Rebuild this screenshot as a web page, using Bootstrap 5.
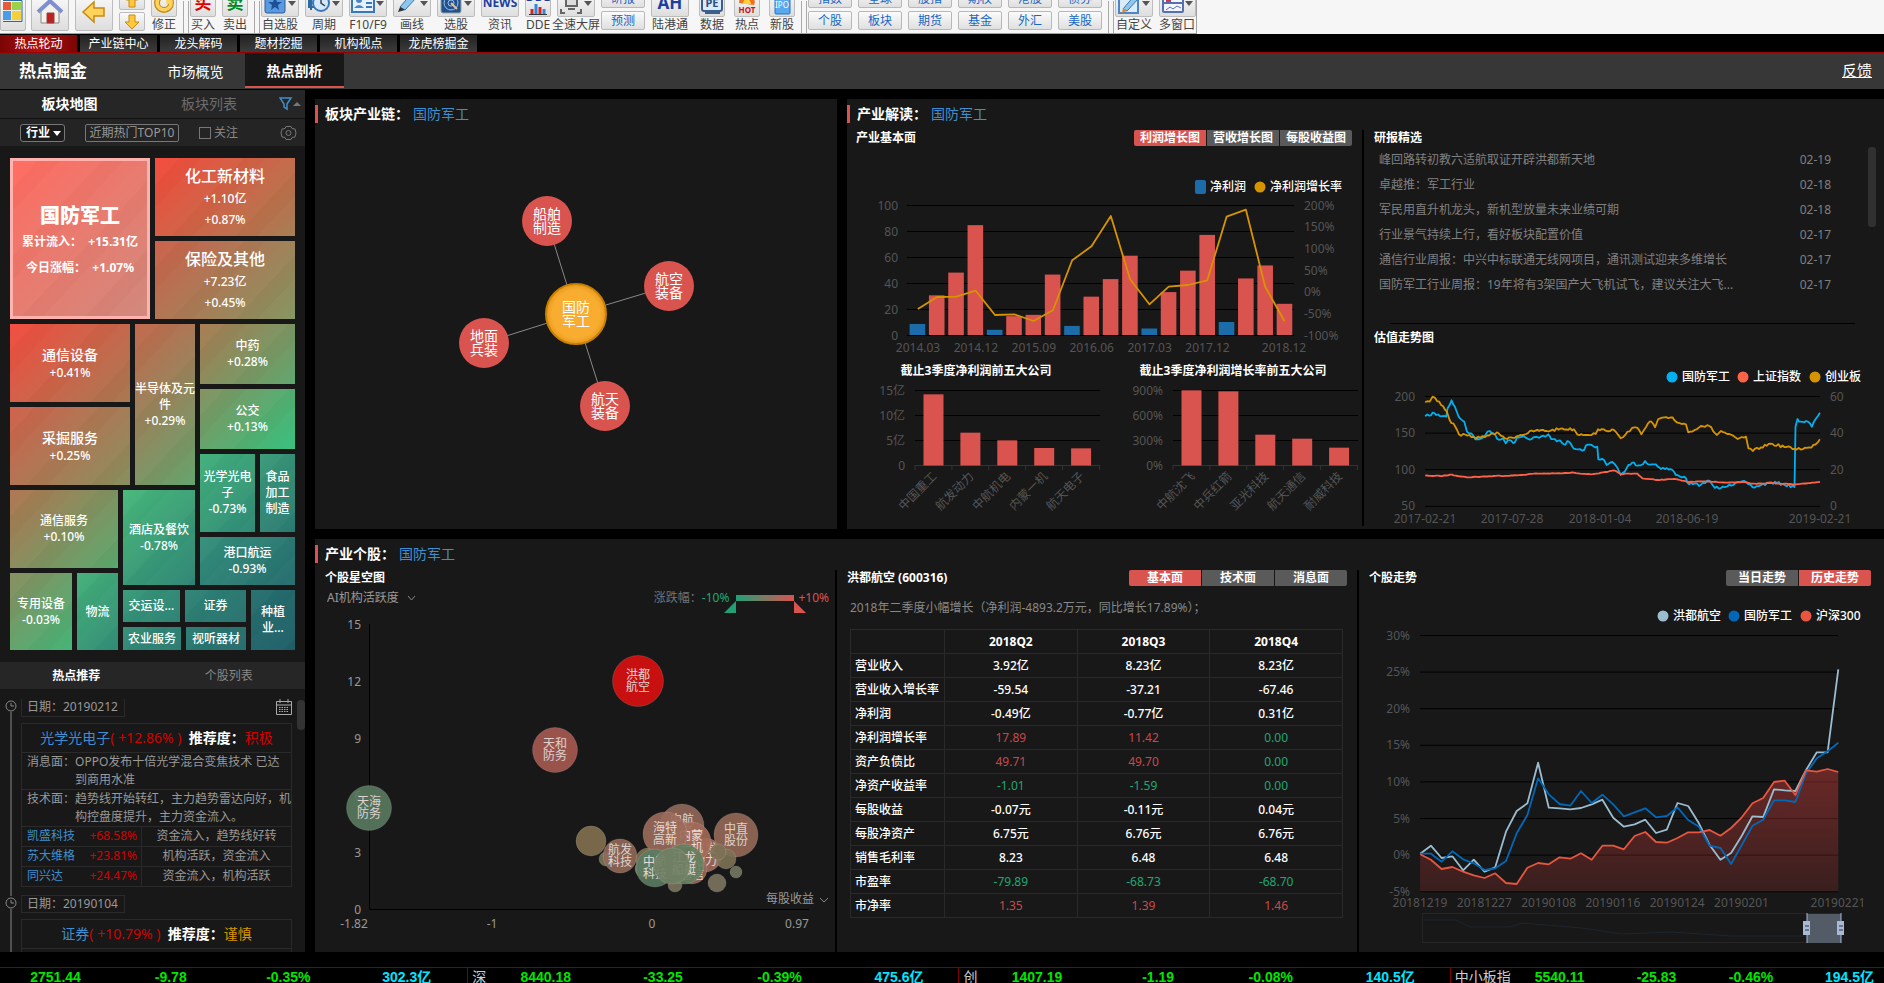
<!DOCTYPE html>
<html lang="zh-CN">
<head>
<meta charset="utf-8">
<meta name="viewport" content="width=device-width, initial-scale=1">
<title>热点掘金</title>
<link rel="stylesheet" href="https://cdn.jsdelivr.net/npm/bootstrap@5.3.0/dist/css/bootstrap.min.css">
<style>
:root{--red:#d9534f;--blue:#3d8fd1;--panel:#181818;--up:#c9484a;--down:#1fa872}
body{background:#000;color:#fff;font:12px/16px "Noto Sans","Noto Sans CJK SC",sans-serif;height:100vh;overflow:hidden}
button{font-family:inherit}
a{color:var(--blue);text-decoration:none}
svg{display:block}
svg text{font-size:12px;fill:#fff}
/* toolbar */
.toolbar{height:34px;background:#f6f6f6;overflow:hidden;flex:none}
.tools{height:34px;border-bottom:1px solid #a0a0a0;border-right:1px solid #a0a0a0}
.tool{background:none;border:0;padding:0;color:#444;font-size:12px;line-height:16px;flex:none;display:flex;flex-direction:column;align-items:flex-start}
.tool>span{white-space:nowrap;text-align:center}
.w-s{width:32px}.w-s>*{width:26px}
.w-m{width:35px}.w-m>*{width:26px}
.w-l{width:44px}.w-l>*{width:38px}
.w-x{width:48px}.w-x>*{width:38px}
.w-start{width:31px}.w-start>*{width:26px}
.wide-label{display:flex;justify-content:center}
.ico{height:28px;border:1px solid #bcbcbc;border-radius:2px;background:linear-gradient(#fafafa,#dedede);display:flex;align-items:center;justify-content:center}
.drop{justify-content:flex-start}
.drop svg{margin-left:1px}
.drop::after{content:"";margin-left:auto;border:4px solid transparent;border-top:5px solid #555;border-bottom:0;margin-right:2px}
.big{height:39px;margin-bottom:2px}
.half{height:19px;margin-bottom:2px}
.glyph{font-weight:700;font-size:17px;color:#1c3f9e}
.glyph.buy{color:#e00000}.glyph.sell{color:#008a1c}.glyph.tiny{font-size:12px}
.bar-sep{width:6px;height:32px;border-left:1px solid #aaa;border-right:1px solid #aaa;margin-right:1px;flex:none}
.links{width:50px;flex:none;padding-right:6px}
.links button{display:block;width:100%;height:19px;margin-bottom:3px;padding:0;border:1px solid #b8b8b8;border-radius:2px;background:linear-gradient(#fbfbfb,#dfdfdf);color:#1767c4;font-size:12px;line-height:17px}
/* tabs */
.tabs{height:19px;padding-top:1px;gap:3px;border-bottom:1px solid #900;flex:none}
.tabs button{width:77px;height:17px;border:0;padding:0;background:linear-gradient(#222,#3c3c3c);color:#fff;font-size:12px;line-height:17px}
.tabs .on{background:linear-gradient(90deg,#7a0505,#b01111 50%,#7a0505)}
.head{height:36px;background:#373737;flex:none;padding-left:19px;font-size:14px;margin-bottom:1px}
.head h1{font-size:17px;line-height:36px;font-weight:700;margin:0;width:127px}
.head button{height:35px;width:99px;border:0;background:none;color:#fff;font-size:14px;padding:2px 0 0}
.head .on{background:var(--panel);border-bottom:2px solid var(--red);font-weight:700}
.head a{color:#fff;text-decoration:underline;font-size:15px;margin-left:auto;padding:9px 12px}
/* sidebar */
main{min-height:0}
.side{width:305px;background:var(--panel);flex:none;overflow:hidden;margin-bottom:15px}
.side-tabs{height:29px;background:#262626;font-size:14px;border-bottom:1px solid #111}
.side-tabs button,.rec-tabs button{border:0;background:none;color:#6c6c6c;padding:0}
.side-tabs button{width:139px}
.side-tabs button+button{text-align:left;padding-left:42px;width:130px}
.side-tabs .on,.rec-tabs .on{color:#fff;font-weight:700}
.filters{height:27px;background:#242424;color:#888;padding:1px 0 0 20px}
.filters select{appearance:none;background:#1c1c1c;border:1px solid #777;border-radius:3px;color:#fff;font:700 12px/16px "Noto Sans","Noto Sans CJK SC",sans-serif;width:45px;height:18px;padding:0 5px}
.caret{position:relative}
.caret::after{content:"";position:absolute;right:4px;top:7px;border:4px solid transparent;border-top:5px solid #fff;border-bottom:0;pointer-events:none}
.filters button{background:none;border:1px solid #777;border-radius:2px;color:#999;font-size:12px;line-height:16px;height:18px;width:94px;padding:0;margin:0 20px;white-space:nowrap}
.filters input{appearance:none;width:12px;height:12px;border:1px solid #777;margin:0 3px 0 0}
.map{height:492px;margin:12px 10px;gap:5px;flex:none}
.map .d-flex{gap:5px;min-width:0;min-height:0}
.tile{min-width:0;min-height:0;display:flex;flex-direction:column;align-items:center;justify-content:center;text-align:center;overflow:hidden;line-height:16px;font-weight:500;
 background:repeating-linear-gradient(133deg,rgba(255,255,255,.02) 0 18px,rgba(0,0,0,.012) 18px 34px,rgba(255,255,255,.01) 34px 47px),linear-gradient(135deg,var(--a),var(--b))}
.tile b{font-size:20px;line-height:26px}
.t16{font-size:16px;line-height:24px}.t14{font-size:14px;line-height:20px}
.r22{line-height:21px}
.hero{border:3px solid #ffb2ae;--a:#ff6a60;--b:#d0887a;font-weight:700;padding-top:6px}
.hero span{line-height:26px}
.c1{--a:#f4493a;--b:#a57c50}.c2{--a:#cc5f49;--b:#83955f}.c3{--a:#f34b3e;--b:#a57850}.c4{--a:#d05f49;--b:#868f5c}
.c5{--a:#c4664a;--b:#62a36b}.c6{--a:#a97a50;--b:#5ca56c}.c7{--a:#85905e;--b:#33c07c}.c8{--a:#42b07a;--b:#2f8a76}
.c9{--a:#3a9a78;--b:#2b7a72}.c10{--a:#34907a;--b:#256c6e}.c11{--a:#b0744e;--b:#58a86c}.c12{--a:#48b87a;--b:#2d8474}
.c13{--a:#8a8c5c;--b:#42b477}.c14{--a:#44b078;--b:#318c76}.c15{--a:#389a78;--b:#2c8074}.c16{--a:#308476;--b:#26706e}
.c17{--a:#358e76;--b:#2a7a72}.c18{--a:#2b7c72;--b:#256a6c}.c19{--a:#26706e;--b:#1f5e68}
.rec-tabs{height:27px;background:#262626;flex:none}
.rec-tabs button:not(.on){color:#888}
.feed{color:#999;padding:10px 13px 0 21px;position:relative}
.feed .rail{position:absolute;left:5px;top:10px}
.feed .thumb{position:absolute;right:0;top:11px;width:8px;height:30px;border-radius:4px;background:#333}
.date{width:104px;height:18px;border:1px solid #2a2a2a;padding-left:5px;line-height:16px}
.rec{border:1px solid #2a2a2a;margin:6px 0 8px}
.rec>div+div{border-top:1px solid #2a2a2a}
.rec h3{font-size:14px;line-height:28px;margin:0;font-weight:400;text-align:center;color:#fff;border-bottom:1px solid #2a2a2a}
.rec h3 i,.rd{color:#d40000;font-style:normal}
.rec h3 .warn{color:#d69400}
.rec .say{line-height:18px;padding-left:5px;height:36px}
.rec .say+.say{height:37px}
.rec .say span{flex:none}
.rec .say div{margin-right:-1px;flex:1}
.stk{height:20px;line-height:18px;white-space:nowrap}
.stk>div:first-child{width:120px;border-right:1px solid #2a2a2a;padding:0 4px 0 5px}
/* panels */
.main-grid{padding:9px 0 15px 10px;gap:10px;min-width:0}
.pane{background:var(--panel);min-width:0;min-height:0;overflow:hidden}
.pane-title{border-left:3px solid var(--red);font-size:14px;line-height:18px;padding-left:7px;margin:6px 0 0;font-weight:700}
.pane-title a{font-weight:400;margin-left:4px}
.cols{padding-top:7px}
.cols>div{min-width:0}
.sub{font-size:12px;line-height:16px;font-weight:700;margin:0}
.sub-in{padding-left:10px}
.vline{width:2px;background:#000;flex:none}
.seg-btn{display:flex;gap:1px}
.seg-btn button{width:72px;height:16px;border:0;padding:0;background:#5a5a5a;color:#fff;font-size:12px;font-weight:700;line-height:16px}
.seg-btn .on{background:var(--red)}
.seg-btn button:first-child{border-radius:2px 0 0 2px}.seg-btn button:last-child{border-radius:0 2px 2px 0}
.news{list-style:none;margin:1px 0 0;padding:0 53px 0 15px;line-height:25px;position:relative}
.news a{color:#808080}.news li{display:flex;justify-content:space-between;color:#808080}
.news::after{content:"";position:absolute;right:8px;top:0;width:8px;height:80px;border-radius:3px;background:#303030}
.rule{border-top:1px solid #000;margin:16px 29px 6px 26px}
.news-box{height:177px}
.pick{appearance:none;background:none;border:0;color:#999;font:12px/16px "Noto Sans","Noto Sans CJK SC",sans-serif;padding:0}
.ax text{fill:#555}.ax2 text{fill:#999}
.axis-row{padding-left:12px;height:23px}
.lo{color:#1fa878;margin-right:7px}.hi{color:#d9534f;margin:0 6px 0 4px}
.grade{height:6px;width:58px;background:linear-gradient(90deg,#20a077,#d9534f)}
.grade-ends{position:absolute;left:-12px;top:6px}
.note{color:#888;padding:14px 0 0 13px}
.fin{width:493px;border-collapse:collapse;table-layout:fixed;margin:13px 0 0 13px;font-weight:500}
.fin th,.fin td{border:1px solid #2a2a2a;height:24px;padding:0;text-align:center;line-height:16px}
.fin th:first-child{width:94px;text-align:left;padding-left:4px;font-weight:500;white-space:nowrap}
.up{color:var(--up);font-weight:400}.dn{color:var(--down);font-weight:400}
/* ticker */
.ticker{height:16px;border-top:1px solid #800000;overflow:hidden;flex:none;font:700 14px/18px "Liberation Sans","Noto Sans CJK SC",sans-serif;color:#00e600}
.ticker>div{display:grid;text-align:right;white-space:nowrap}
.ticker>div+div{border-left:1px solid #800000}
.ticker em{font-style:normal;font-weight:400;color:#ccc;text-align:left;padding-left:4px}
.ticker u{text-decoration:none;color:#00e5ff}
.k1{flex:468;grid-template-columns:81fr 106fr 124fr 121fr 36fr}
.k2{flex:491;grid-template-columns:25fr 78fr 112fr 119fr 122fr 35fr}
.k4{flex:434;grid-template-columns:62fr 72fr 92fr 97fr 101fr 10fr}
</style>
</head>
<body class="d-flex flex-column">
<header class="toolbar"><div class="tools d-inline-flex align-items-end">
 <button class="tool w-start" aria-label="开始"><span class="ico big"><svg width="20" height="24" viewBox="0 0 20 24"><path d="M0 2h8v8H0z" fill="#e85a3a"/><path d="M9 2h9v8H9z" fill="#9bd04a"/><path d="M0 11h8v9H0z" fill="#4a9be8"/><path d="M9 11h9v9H9z" fill="#f6cf3c"/><path d="M0 .5h19v21H0" fill="none" stroke="#2c6ba0"/></svg></span></button>
 <button class="tool w-l" aria-label="首页"><span class="ico big"><svg width="28" height="28" viewBox="0 0 28 28"><path d="M5 12v13h18V12L14 5z" fill="#f4f0ea" stroke="#888"/><path d="M2 14 14 3l12 11" fill="none" stroke="#7d8fd0" stroke-width="4"/><path d="M11 15h7v10h-7z" fill="#c02020" stroke="#844"/></svg></span></button>
 <button class="tool w-l" aria-label="后退"><span class="ico big"><svg width="26" height="26" viewBox="0 0 26 26"><path d="M2 13 13 3v6h10v8H13v6z" fill="#ffd25a" stroke="#c58a18" stroke-width="1.5"/></svg></span></button>
 <button class="tool w-s" aria-label="上下翻页"><span class="ico half"><svg width="14" height="16" viewBox="0 0 14 16"><path d="M4 14V7H1l6-6 6 6h-3v7z" fill="#ffc83c" stroke="#c58a18"/></svg></span><span class="ico half"><svg width="16" height="16" viewBox="0 0 16 16"><path d="M5 1v7H1l7 7 7-7h-4V1z" fill="#ffc83c" stroke="#c58a18"/></svg></span></button>
 <button class="tool w-s"><span class="ico"><svg width="22" height="22" viewBox="0 0 22 22"><circle cx="11" cy="11" r="7" fill="none" stroke="#c58a18" stroke-width="6"/><path d="M6 6a7 7 0 1 0 9-1v7" fill="none" stroke="#ffd25a" stroke-width="3.5"/></svg></span><span>修正</span></button>
 <i class="bar-sep" aria-hidden="true"></i>
 <button class="tool w-s"><span class="ico glyph buy">买</span><span>买入</span></button>
 <button class="tool w-s"><span class="ico glyph sell">卖</span><span>卖出</span></button>
 <i class="bar-sep" aria-hidden="true"></i>
 <button class="tool w-l"><span class="ico drop"><svg width="24" height="24" viewBox="0 0 24 24"><rect x="2" y="2" width="20" height="20" rx="2" fill="#5a9be0" stroke="#2c5a9a"/><path d="m12 6 2 5h5l-4 3 1 5-4-3-4 3 1-5-4-3h5z" fill="#1d4f96"/></svg></span><span>自选股</span></button>
 <button class="tool w-l"><span class="ico drop"><svg width="24" height="24" viewBox="0 0 24 24"><path d="M4 3v16M2 7h5v9H2z" fill="#d8e8fa" stroke="#2c6ba0" stroke-width="2"/><circle cx="14" cy="12" r="8" fill="#d6e8fb" stroke="#3b78b8" stroke-width="2"/><path d="M14 6v6l4 3" fill="none" stroke="#345" stroke-width="1.5"/></svg></span><span>周期</span></button>
 <button class="tool w-l"><span class="ico drop"><svg width="24" height="24" viewBox="0 0 24 24"><rect x="1" y="3" width="22" height="18" fill="#e8f2ff" stroke="#3b78b8" stroke-width="2"/><circle cx="8" cy="9" r="3" fill="#4a86c8"/><path d="M3 17q5-6 10 0" fill="#4a86c8"/><path d="M15 8h6M15 12h6M15 16h6" stroke="#3b78b8" stroke-width="2"/></svg></span><span>F10/F9</span></button>
 <button class="tool w-l"><span class="ico drop"><svg width="24" height="24" viewBox="0 0 24 24"><path d="M5 16 17 2l5 4L10 19z" fill="#8fc6ee" stroke="#3b78a8"/><path d="m5 16-2 5 7-2z" fill="#333"/></svg></span><span>画线</span></button>
 <button class="tool w-l"><span class="ico drop"><svg width="24" height="24" viewBox="0 0 24 24"><rect x="2" y="2" width="20" height="20" rx="2" fill="#24508c" stroke="#8aa"/><circle cx="12" cy="12" r="7" fill="none" stroke="#9cc4ee"/><circle cx="12" cy="12" r="3" fill="none" stroke="#9cc4ee"/><path d="m12 12 6 6" stroke="#e8c080" stroke-width="2"/></svg></span><span>选股</span></button>
 <button class="tool w-l"><span class="ico glyph tiny">NEWS</span><span>资讯</span></button>
 <button class="tool w-s"><span class="ico glyph tiny flex-column lh-1">DDE<svg width="20" height="12" viewBox="0 0 20 12"><path d="M1 11.5h18" stroke="#333"/><path d="M4 11V6M12 11V4" stroke="#e02020" stroke-width="3"/><path d="M8 11V1M16 11V6" stroke="#2a8ae0" stroke-width="3"/></svg></span><span>DDE</span></button>
 <button class="tool w-l"><span class="ico drop"><svg width="24" height="24" viewBox="0 0 24 24"><rect x="7" y="6" width="11" height="9" fill="#ddd" stroke="#666" stroke-width="2"/><path d="M9 18h7M2 18v4h4M22 18v4h-4M2 6V2h4M22 6V2h-4" fill="none" stroke="#666" stroke-width="2"/></svg></span><span class="wide-label">全速大屏</span></button>
 <div class="links"><button>研报</button><button>预测</button></div>
 <button class="tool w-x"><span class="ico glyph">AH</span><span>陆港通</span></button>
 <button class="tool w-m"><span class="ico"><svg width="24" height="24" viewBox="0 0 24 24"><rect x="2" y="3" width="20" height="17" rx="2" fill="#dbe9f8" stroke="#3a5f8c" stroke-width="2"/><path d="M5 22h15" stroke="#3a5f8c" stroke-width="2"/><text x="12" y="16" text-anchor="middle" style="font-size:11px;fill:#2a4f80;font-weight:700">PE</text></svg></span><span>数据</span></button>
 <button class="tool w-m"><span class="ico"><svg width="24" height="24" viewBox="0 0 24 24"><path d="M4 12q0-5 4-8 0 3 3 3 0-3 2-6 1 4 5 6 3 3 1 7z" fill="#f2701e"/><path d="M8 13q0-4 4-6 4 3 4 6z" fill="#ffd23c"/><text x="12" y="22" text-anchor="middle" style="font-size:8px;fill:#d01010;font-weight:700">HOT</text></svg></span><span>热点</span></button>
 <button class="tool w-s"><span class="ico"><svg width="22" height="24" viewBox="0 0 22 24"><rect x="4" y="1" width="15" height="22" rx="1" fill="#58a9ee" stroke="#2474c0"/><text x="11" y="17" text-anchor="middle" style="font-size:8px;fill:#fff">IPO</text></svg></span><span>新股</span></button>
 <i class="bar-sep" aria-hidden="true"></i>
 <div class="links"><button>指数</button><button>个股</button></div>
 <div class="links"><button>全球</button><button>板块</button></div>
 <div class="links"><button>股指</button><button>期货</button></div>
 <div class="links"><button>期权</button><button>基金</button></div>
 <div class="links"><button>港股</button><button>外汇</button></div>
 <div class="links"><button>债券</button><button>美股</button></div>
 <i class="bar-sep" aria-hidden="true"></i>
 <button class="tool w-l"><span class="ico drop"><svg width="24" height="24" viewBox="0 0 24 24"><rect x="2" y="4" width="19" height="18" fill="#dcebfa" stroke="#4a86c8" stroke-width="2"/><path d="M6 18 18 4l4 3L10 20z" fill="#8fc6ee" stroke="#3b78a8"/><path d="m6 17-1 5 5-2z" fill="#e08a20"/></svg></span><span>自定义</span></button>
 <button class="tool"><span class="ico drop"><svg width="24" height="24" viewBox="0 0 24 24"><rect x="2" y="2" width="20" height="19" rx="1" fill="#f4f6ff" stroke="#5570b0" stroke-width="2"/><path d="M3 12h18" stroke="#5570b0" stroke-width="2"/><path d="M5 7h5M5 10h5" stroke="#c03a5a" stroke-width="2"/><path d="m5 19 4-3 3 2 4-3 4 2" stroke="#5570b0" fill="none"/></svg></span><span>多窗口</span></button>
</div></header>
<nav class="tabs d-flex"><button class="on">热点轮动</button><button>产业链中心</button><button>龙头解码</button><button>题材挖掘</button><button>机构视点</button><button>龙虎榜掘金</button></nav>
<div class="head d-flex"><h1>热点掘金</h1><button>市场概览</button><button class="on">热点剖析</button><a href="#">反馈</a></div>

<main class="d-flex flex-grow-1">
<aside class="side d-flex flex-column">
 <div class="side-tabs d-flex align-items-center flex-shrink-0"><button class="on">板块地图</button><button>板块列表</button>
  <svg class="ms-auto me-1" width="22" height="14" viewBox="0 0 22 14"><path d="M1 1h11L8 7v5l-3-2V7z" fill="none" stroke="#3d8fd1" stroke-width="1.5"/><path d="m14 9 4-4 4 4z" fill="#777"/></svg></div>
 <div class="filters d-flex align-items-center flex-shrink-0"><label class="caret"><select aria-label="分类"><option>行业</option></select></label><button>近期热门TOP10</button><label class="d-flex align-items-center"><input type="checkbox">关注</label>
  <svg class="ms-auto me-2" width="17" height="16" viewBox="0 0 17 16" fill="none" stroke="#777"><path d="M6 1.5h5l1 2 3 .5 1 4-1 4-3 .5-1 2H6l-1-2-3-.5-1-4 1-4 3-.5z"/><circle cx="8.5" cy="8" r="2.5"/></svg></div>
 <div class="map d-flex flex-column">
  <div class="d-flex" style="flex:161"><div class="tile hero w-50"><b>国防军工</b><span>累计流入：&nbsp; +15.31亿</span><span>今日涨幅：&nbsp; +1.07%</span></div>
   <div class="d-flex flex-column w-50"><div class="tile c1 flex-fill r22"><span class="t16">化工新材料</span><span>+1.10亿</span><span>+0.87%</span></div><div class="tile c2 flex-fill r22"><span class="t16">保险及其他</span><span>+7.23亿</span><span>+0.45%</span></div></div></div>
  <div class="d-flex" style="flex:326">
   <div class="d-flex flex-column" style="width:185px">
    <div class="d-flex" style="flex:161"><div class="d-flex flex-column" style="width:120px"><div class="tile c3" style="flex:1"><span class="t14">通信设备</span><span>+0.41%</span></div><div class="tile c4" style="flex:1"><span class="t14">采掘服务</span><span>+0.25%</span></div></div><div class="tile c5" style="flex:1">半导体及元件<span>+0.29%</span></div></div>
    <div class="d-flex" style="flex:160">
     <div class="d-flex flex-column" style="width:108px"><div class="tile c11" style="flex:78"><span>通信服务</span><span>+0.10%</span></div><div class="d-flex" style="flex:77"><div class="tile c13" style="flex:62">专用设备<span>-0.03%</span></div><div class="tile c14" style="flex:41">物流</div></div></div>
     <div class="d-flex flex-column" style="width:72px"><div class="tile c12" style="flex:95">酒店及餐饮<span>-0.78%</span></div><div style="flex:60"></div></div>
    </div>
   </div>
   <div class="d-flex flex-column" style="width:95px"><div class="tile c6" style="flex:60">中药<span>+0.28%</span></div><div class="tile c7" style="flex:60">公交<span>+0.13%</span></div>
    <div class="d-flex" style="flex:78"><div class="tile c8" style="flex:55">光学光电子<span>-0.73%</span></div><div class="tile c9" style="flex:35">食品<br>加工<br>制造</div></div>
    <div class="tile c10" style="flex:48">港口航运<span>-0.93%</span></div><div style="flex:60"></div></div>
  </div>
  <div class="d-flex" style="height:60px;margin:-65px 0 0 113px"><div class="d-flex flex-column" style="width:123px"><div class="d-flex" style="flex:32"><div class="tile c15" style="flex:57">交运设...</div><div class="tile c16" style="flex:61">证券</div></div><div class="d-flex" style="flex:23"><div class="tile c17" style="flex:58">农业服务</div><div class="tile c18" style="flex:60">视听器材</div></div></div><div class="tile c19" style="flex:1">种植<br>业...</div></div>
 </div>
 <div class="rec-tabs d-flex"><button class="on w-50">热点推荐</button><button class="w-50">个股列表</button></div>
 <div class="feed">
  <svg class="rail" width="13" height="260" viewBox="0 0 13 260" fill="none" stroke="#888"><circle cx="6" cy="7" r="5"/><path d="M6 4v3h3M6 13v184M6 210v50M6 201v3h3"/><circle cx="6" cy="204" r="5"/></svg><i class="thumb"></i>
  <div class="d-flex justify-content-between"><div class="date border-top-0">日期：20190212</div><svg width="16" height="16" viewBox="0 0 16 16" fill="none" stroke="#aaa"><path d="M.5 2.5h15v13H.5zM.5 6h15M4 0v4M12 0v4"/><path d="M3 8.5h10M3 10.5h10M3 12.5h10" stroke-dasharray="1.5 1"/></svg></div>
  <div class="rec"><h3><a href="#">光学光电子</a><i>( +12.86% )</i>&nbsp; <b>推荐度：</b><i>积极</i></h3>
   <div class="say d-flex"><span>消息面：</span><div>OPPO发布十倍光学混合变焦技术 已达<br>到商用水准</div></div>
   <div class="say d-flex"><span>技术面：</span><div>趋势线开始转红，主力趋势雷达向好，机构控盘度提升，主力资金流入。</div></div>
   <div class="stk d-flex"><div class="d-flex justify-content-between"><a href="#">凯盛科技</a><span class="rd">+68.58%</span></div><div class="flex-fill text-center">资金流入，趋势线好转</div></div>
   <div class="stk d-flex"><div class="d-flex justify-content-between"><a href="#">苏大维格</a><span class="rd">+23.81%</span></div><div class="flex-fill text-center">机构活跃，资金流入</div></div>
   <div class="stk d-flex"><div class="d-flex justify-content-between"><a href="#">同兴达</a><span class="rd">+24.47%</span></div><div class="flex-fill text-center">资金流入，机构活跃</div></div>
  </div>
  <div class="date">日期：20190104</div>
  <div class="rec"><h3><a href="#">证券</a><i>( +10.79% )</i>&nbsp; <b>推荐度：</b><span class="warn">谨慎</span></h3><div class="say"></div></div>
 </div>
</aside>

<div class="main-grid d-flex flex-column flex-grow-1">
 <div class="d-flex" style="flex:430;gap:10px;min-height:0">
  <section class="pane" style="flex:522"><h2 class="pane-title">板块产业链：<a href="#">国防军工</a></h2>
   <svg id="net" width="100%" viewBox="315 123 522 400"></svg></section>
  <section class="pane" style="flex:1037"><h2 class="pane-title">产业解读：<a href="#">国防军工</a></h2>
   <div class="cols d-flex">
    <div style="flex:515"><div class="d-flex justify-content-between" style="padding:0 10px 0 9px"><h3 class="sub">产业基本面</h3><div class="seg-btn"><button class="on">利润增长图</button><button>营收增长图</button><button>每股收益图</button></div></div>
     <svg id="profit" class="ax" width="100%" viewBox="847 146 515 373"></svg></div>
    <i class="vline"></i>
    <div style="flex:520"><div class="news-box"><h3 class="sub sub-in">研报精选</h3>
     <ul class="news"><li><a href="#">峰回路转初教六适航取证开辟洪都新天地</a><span>02-19</span></li><li><a href="#">卓越推：军工行业</a><span>02-18</span></li><li><a href="#">军民用直升机龙头，新机型放量未来业绩可期</a><span>02-18</span></li><li><a href="#">行业景气持续上行，看好板块配置价值</a><span>02-17</span></li><li><a href="#">通信行业周报：中兴中标联通无线网项目，通讯测试迎来多维增长</a><span>02-17</span></li><li><a href="#">国防军工行业周报：19年将有3架国产大飞机试飞，建议关注大飞...</a><span>02-17</span></li></ul></div>
     <div class="rule"></div><h3 class="sub sub-in">估值走势图</h3>
     <svg id="value" class="ax" width="100%" viewBox="1364 346 520 180"></svg></div>
   </div></section>
 </div>
 <section class="pane" style="flex:413"><h2 class="pane-title">产业个股：<a href="#">国防军工</a></h2>
  <div class="cols d-flex h-100">
   <div style="flex:520"><h3 class="sub sub-in">个股星空图</h3>
    <div class="axis-row d-flex align-items-center"><select class="pick" aria-label="纵轴指标"><option>AI机构活跃度</option></select><svg class="ms-2" width="9" height="6" viewBox="0 0 9 6"><path d="m1 1 3.500 4L8 1" fill="none" stroke="#888"/></svg>
     <span class="ms-auto text-secondary">涨跌幅：</span><span class="lo">-10%</span><div class="position-relative"><div class="grade"></div><svg class="grade-ends" width="82" height="12" viewBox="0 0 82 12"><path d="M0 12 12 0v12z" fill="#20a077"/><path d="M70 0v12h12z" fill="#d9534f"/></svg></div><span class="hi">+10%</span></div>
    <svg id="stars" class="ax2" width="100%" viewBox="315 609 520 330"></svg></div>
   <i class="vline"></i>
   <div style="flex:520"><div class="d-flex justify-content-between" style="padding:0 10px"><h3 class="sub">洪都航空 (600316)</h3><div class="seg-btn"><button class="on">基本面</button><button>技术面</button><button>消息面</button></div></div>
    <div class="note">2018年二季度小幅增长（净利润-4893.2万元，同比增长17.89%）；</div>
    <table class="fin" id="fin"><thead><tr><th></th><th>2018Q2</th><th>2018Q3</th><th>2018Q4</th></tr></thead><tbody></tbody></table></div>
   <i class="vline"></i>
   <div style="flex:525"><div class="d-flex justify-content-between" style="padding:0 13px 0 10px"><h3 class="sub">个股走势</h3><div class="seg-btn"><button>当日走势</button><button class="on">历史走势</button></div></div>
    <svg id="trend" class="ax" width="100%" viewBox="1359 586 525 364"></svg></div>
  </div></section>
</div>
</main>
<footer class="ticker d-flex">
 <div class="k1"><span>2751.44</span><span>-9.78</span><span>-0.35%</span><u>302.3亿</u></div>
 <div class="k2"><em>深</em><span>8440.18</span><span>-33.25</span><span>-0.39%</span><u>475.6亿</u></div>
 <div class="k2"><em>创</em><span>1407.19</span><span>-1.19</span><span>-0.08%</span><u>140.5亿</u></div>
 <div class="k4"><em>中小板指</em><span>5540.11</span><span>-25.83</span><span>-0.46%</span><u>194.5亿</u></div>
</footer>
<script src="https://cdn.jsdelivr.net/npm/bootstrap@5.3.0/dist/js/bootstrap.bundle.min.js"></script>
<script>
const $=id=>document.getElementById(id);
const T=(x,y,s,a='start',e='')=>`<text x="${x}" y="${y+4}" text-anchor="${a}" ${e}>${s}</text>`;
const H=(x1,x2,y,c='#000')=>`<path d="M${x1} ${y}H${x2}" stroke="${c}"/>`;
const R=(x,y,w,h,f)=>`<rect x="${x}" y="${y}" width="${w}" height="${h}" fill="${f}"/>`;
const C=(x,y,r,f,e='')=>`<circle cx="${x}" cy="${y}" r="${r}" fill="${f}" ${e}/>`;
const L=(p,c,w=1.8)=>`<polyline points="${p.map(q=>q[0].toFixed(1)+','+q[1].toFixed(1)).join(' ')}" fill="none" stroke="${c}" stroke-width="${w}" stroke-linejoin="round"/>`;
const W='style="fill:#fff;font-weight:500"',B='style="fill:#fff;font-weight:700"';
// industry-chain graph
{const n=[[547,221,'船舶','制造'],[669,286,'航空','装备'],[484,343,'地面','兵装'],[605,406,'航天','装备']],f='style="font-size:14px"';
let s='<defs><radialGradient id="gold"><stop offset=".8" stop-color="#f8ac30"/><stop offset="1" stop-color="#e89a1c"/></radialGradient></defs>';
n.forEach(a=>s+=`<path d="M576 314 ${a[0]} ${a[1]}" stroke="#888"/>`);
n.forEach(a=>s+=C(a[0],a[1],25,'#d9534f')+T(a[0],a[1]-6,a[2],'middle',f)+T(a[0],a[1]+8,a[3],'middle',f));
s+=C(576,314,30,'url(#gold)','stroke="#c98200" stroke-width="2"')+T(576,308,'国防','middle',f)+T(576,322,'军工','middle',f);$('net').innerHTML=s;}
// profit charts
{let s='<rect x="1195" y="180" width="11" height="14" rx="2" fill="#1b6ca8"/>'+T(1210,187,'净利润','start',W)+C(1260,187,5.5,'#d69400')+T(1270,187,'净利润增长率','start',W);
for(let i=0;i<6;i++)s+=H(907,1294,205.5+26*i)+T(898,205.5+26*i,100-20*i,'end');
for(let i=0;i<7;i++)s+=T(1304,205.5+21.7*i,(200-50*i)+'%');
[8.5,30.5,48,84.5,4,14.5,15.5,46.5,7,29.5,43,61,5,33,49.5,77,10,43.5,53.5,24].forEach((v,i)=>s+=R(909.6+19.32*i,335-v*1.3,15.6,v*1.3,i%4?'#d9534f':'#1b6ca8'));
s+=L([657,621,620,602,675,673,693,661,511,469,378,568,643,590,585,571,380,359,590,694].map((y,i)=>[917.8+19.3*i,90+y/3]),'#d69400');
['2014.03','2014.12','2015.09','2016.06','2017.03','2017.12'].forEach((t,i)=>s+=T(918+57.9*i,348,t,'middle'));s+=T(1284,348,'2018.12','middle');
s+=T(976,371,'截止3季度净利润前五大公司','middle',B)+T(1233,371,'截止3季度净利润增长率前五大公司','middle',B);
const sub=(x0,lab,tops,names)=>{for(let i=0;i<4;i++)s+=H(x0,x0+185,390.5+25*i,i==3?'#333':'#000')+T(x0-10,390.5+25*i,lab[i],'end');
 tops.forEach((y,i)=>{const c=x0+18.5+36.9*i;s+=R(c-10,90+y/3,20,375.5-y/3,'#d9534f')+`<text transform="translate(${c+4} 477) rotate(-45)" text-anchor="end">${names[i]}</text>`});
 for(let i=0;i<6;i++)s+=`<path d="M${x0+36.9*i} 465v5" stroke="#333"/>`};
sub(915,['15亿','10亿','5亿','0'],[913,1028,1051,1074,1075],['中国重工','航发动力','中航机电','内蒙一机','航天电子']);
sub(1173,['900%','600%','300%','0%'],[901,904,1034,1046,1073],['中航沈飞','中兵红箭','亚光科技','航天通信','耐威科技']);
$('profit').innerHTML=s;}
// valuation lines
{let s='';[[1672,'#00b0f0','国防军工'],[1743,'#ff6347','上证指数'],[1815,'#d69400','创业板']].forEach(a=>s+=C(a[0],377,5.5,a[1])+T(a[0]+10,377,a[2],'start',W));
[200,150,100,50].forEach((v,i)=>s+=H(1425,1820,396.5+36.6*i)+T(1415,396.5+36.6*i,v,'end')+T(1830,396.5+36.6*i,60-20*i));
[[1425,'2017-02-21'],[1512,'2017-07-28'],[1600,'2018-01-04'],[1687,'2018-06-19'],[1820,'2019-02-21']].forEach(a=>s+=T(a[0],519,a[1],'middle'));
let seed=7;const rnd=()=>(seed=(seed*16807)%2147483647)/2147483647-.5;
const path=(str,amp)=>{const p=str.split(' ').map(q=>q.split(',').map(Number)),o=[];
 p.forEach((a,i)=>{if(i){const b=p[i-1],n=Math.max(1,Math.round((a[0]-b[0])/6));for(let k=1;k<n;k++)o.push([b[0]+(a[0]-b[0])*k/n,b[1]+(a[1]-b[1])*k/n+rnd()*amp])}o.push(a)});
 return o.map(a=>[1360+a[0]/2.992,90+a[1]/3])};
s+=L(path('195,979 208,977 217,968 228,975 258,980 262,955 274,931 284,950 295,980 312,995 320,1025 333,1030 345,1048 358,1048 375,1035 388,1023 405,1035 410,1046 428,1045 436,1060 448,1050 463,1058 470,1042 490,1038 502,1046 530,1041 555,1040 563,1033 572,1047 600,1052 610,1063 625,1055 640,1076 665,1082 682,1064 710,1070 713,1108 730,1110 738,1125 755,1116 768,1130 780,1155 792,1145 803,1125 820,1118 830,1127 840,1126 853,1113 862,1123 885,1123 895,1132 935,1140 945,1155 970,1160 985,1183 1020,1184 1045,1172 1062,1194 1085,1190 1105,1184 1155,1176 1175,1192 1200,1185 1230,1177 1265,1182 1300,1191 1303,1010 1309,987 1318,995 1340,995 1352,1010 1365,985 1376,968',9),'#00b0f0');
s+=L(path('195,1157 240,1158 275,1154 320,1162 400,1158 470,1156 520,1151 600,1150 640,1148 690,1153 740,1146 760,1141 780,1152 830,1151 845,1165 890,1170 940,1167 985,1176 1045,1174 1100,1178 1150,1176 1180,1181 1230,1179 1300,1183 1376,1176',2),'#ff6347');
s+=L(path('195,937 208,935 217,920 237,935 260,965 268,990 285,1010 296,1033 340,1041 360,1043 380,1036 415,1030 440,1047 480,1035 525,1022 570,1022 600,1016 640,1018 650,1033 705,1032 712,1018 735,1022 755,1018 780,1045 800,1025 820,1012 835,1020 842,1033 862,1000 872,995 883,1012 892,988 935,982 950,998 975,1003 982,1027 1020,1008 1045,1008 1068,1035 1080,1023 1130,1047 1155,1040 1162,1075 1175,1083 1200,1072 1228,1061 1300,1077 1350,1073 1376,1048',8),'#d69400');
$('value').innerHTML=s;}
// stock bubbles
{let s='<path d="M369.5 624V909.5H809" fill="none" stroke="#000"/>';
[15,12,9,6,3,0].forEach((v,i)=>s+=T(361,625+57*i,v,'end'));
[[354,'-1.82'],[492,'-1'],[652,'0'],[797,'0.97']].forEach(a=>s+=T(a[0],924,a[1],'middle'));
s+=T(766,899,'每股收益')+'<path d="m820 898 4 4 4-4" fill="none" stroke="#888"/>';
[[591,841,15,'#84704f'],[606,859,7,'#78745a'],[620,856,17,'#936a58','航发','科技'],[682,826,22,'#93695a','中航','电子'],[648,860,12,'#84704f'],[643,869,8,'#84705a'],[705,855,17,'#a06c5c','航发','动力'],[692,869,15,'#96685a','天和','通信'],[691,842,20,'#a36a58','内蒙','一机'],[665,834,22,'#9c6c5b','海特','高新'],[736,835,22,'#966a58','中直','股份'],[726,859,10,'#7c7256'],[718,852,8,'#7c7256'],[736,872,6,'#747860'],[717,883,9,'#7b7460'],[675,885,7,'#7b7460'],[655,868,19,'#5b7c62','中航','科技'],[684,864,20,'#64805f','江龙','船艇'],[672,866,18,'#718064'],
[369,808,22.5,'#5a7a60','天海','防务'],[555,750,22.5,'#a85a51','天和','防务'],[638,681,25.5,'#dc1010','洪都','航空']].forEach(a=>{s+=`<g opacity=".9">`+C(a[0],a[1],a[2],a[3],'stroke="#fff" stroke-opacity=".15"')+(a[4]?T(a[0],a[1]-6,a[4],'middle','style="fill:#f2e6e2"')+T(a[0],a[1]+6,a[5],'middle','style="fill:#f2e6e2"'):'')+'</g>'});
$('stars').innerHTML=s;}
// financial table
document.querySelector('#fin tbody').innerHTML=[['营业收入','3.92亿','8.23亿','8.23亿'],['营业收入增长率','-59.54','-37.21','-67.46'],['净利润','-0.49亿','-0.77亿','0.31亿'],['净利润增长率','17.89','11.42','0.00','uud'],['资产负债比','49.71','49.70','0.00','uud'],['净资产收益率','-1.01','-1.59','0.00','ddd'],['每股收益','-0.07元','-0.11元','0.04元'],['每股净资产','6.75元','6.76元','6.76元'],['销售毛利率','8.23','6.48','6.48'],['市盈率','-79.89','-68.73','-68.70','ddd'],['市净率','1.35','1.39','1.46','uuu']].map(r=>`<tr><th>${r[0]}</th>`+[1,2,3].map(i=>`<td class="${r[4]?{u:'up',d:'dn'}[r[4][i-1]]:''}">${r[i]}</td>`).join('')+'</tr>').join('');
// price trend
{let s='<defs><linearGradient id="area" x1="0" y1="0" x2="0" y2="1"><stop offset="0" stop-color="#d9403c" stop-opacity=".42"/><stop offset="1" stop-color="#d9403c" stop-opacity=".17"/></linearGradient></defs>';
[[1663,'#9bbdd0','洪都航空'],[1734,'#0068b7','国防军工'],[1806,'#e85640','沪深300']].forEach(a=>s+=C(a[0],616,5.5,a[1])+T(a[0]+10,616,a[2],'start',W));
for(let i=0;i<8;i++)s+=H(1420,1838,635.5+36.6*i)+T(1410,635.5+36.6*i,(30-5*i)+'%','end');
['20181219','20181227','20190108','20190116','20190124','20190201'].forEach((t,i)=>s+=T(1420+64.3*i,903,t,'middle'));s+=T(1838,903,'20190221','middle');
const P=a=>a.map((y,i)=>[1420.2+10.72*i,530+y/3]);
const red=P([973,989,1017,1011,1025,1036,1044,1030,1059,1062,1013,999,1003,982,986,970,989,947,947,958,918,906,936,938,924,907,907,900,917,894,862,820,804,756,752,795,721,725,717,726]);
s+=`<path d="M1420 891.5L${red.map(p=>p.join(' ')).join('L')}V891.5z" fill="url(#area)"/>`;
s+=L(P([971,947,984,979,1021,989,1025,1012,905,843,820,698,833,835,838,834,823,809,863,890,883,869,909,899,819,828,880,945,989,969,917,859,861,778,781,783,720,667,667,418]),'#9bbdd0');
s+=L(P([971,971,995,964,988,1000,1020,1015,993,910,855,745,793,822,827,783,819,794,823,859,847,835,862,858,832,870,890,947,954,1002,945,887,869,811,811,816,730,685,664,638]),'#0068b7')+L(red,'#e85640');
s+='<rect x="1422.5" y="913.5" width="418" height="29" fill="none" stroke="#262626"/><path d="M1424 920h32l14 7h40l12-4 60 5 40 6 50-2 60 4h74" fill="none" stroke="#1c2530"/>'+R(1807,914,34,29,'#535b66');
[1807,1841].forEach(x=>s+=`<path d="M${x} 913v30" stroke="#a8b8d8"/>`+R(x-4,921,7,14,'#a8b8d8')+`<path d="M${x-2} 926h4M${x-2} 930h4" stroke="#333"/>`);
$('trend').innerHTML=s;}
</script>
</body>
</html>
